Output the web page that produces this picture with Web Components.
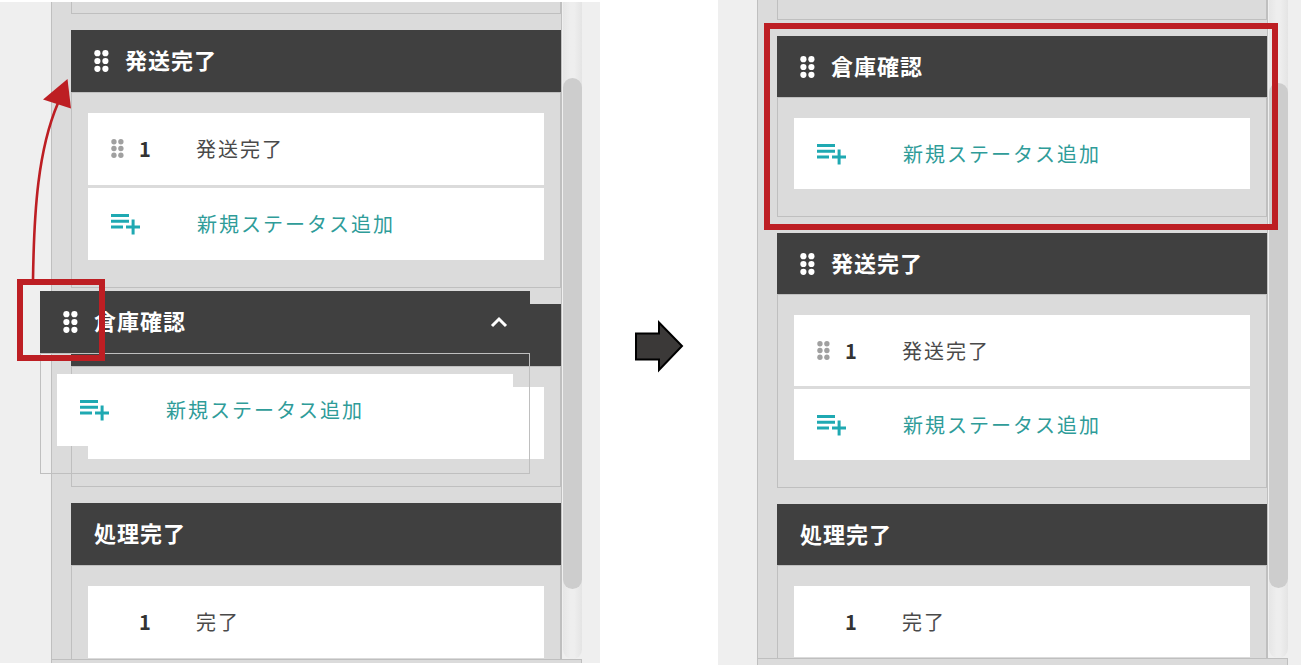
<!DOCTYPE html>
<html lang="ja">
<head>
<meta charset="utf-8">
<meta name="viewport" content="width=device-width, initial-scale=1">
<title>ステータス管理</title>
<style>
body { margin: 0; background: #fff; font-family: "Noto Sans CJK JP", sans-serif; }
</style>
</head>
<body>
<reorder-guide></reorder-guide>

<script>
const define = (name, html) => {
  const template = document.createElement('template');
  template.innerHTML = html;
  customElements.define(name, class extends HTMLElement {
    constructor() {
      super();
      this.attachShadow({ mode: 'open' }).append(template.content.cloneNode(true));
    }
  });
};

/* Six-dot grip */
define('drag-handle', `
<style>
  :host { display: block; line-height: 0; }
  svg { display: block; width: 100%; fill: currentColor; }
</style>
<svg viewBox="0 0 15 22" aria-hidden="true">
  <circle cx="3.4" cy="3.2" r="3.1"/><circle cx="11.4" cy="3.2" r="3.1"/>
  <circle cx="3.4" cy="11" r="3.1"/><circle cx="11.4" cy="11" r="3.1"/>
  <circle cx="3.4" cy="18.8" r="3.1"/><circle cx="11.4" cy="18.8" r="3.1"/>
</svg>`);

/* One status line: grip, order number, name */
define('status-row', `
<style>
  :host {
    display: grid; grid-template-columns: 28px 57px 1fr; align-items: center;
    height: var(--row, 72px); padding-left: 23px; box-sizing: border-box;
    background: #fff; color: #4a4a4a; font-size: 20px; line-height: 30px; letter-spacing: 2px;
  }
  drag-handle { width: 13px; color: #a0a0a0; }
  :host([fixed]) drag-handle { visibility: hidden; }
  .number { color: #333; font-weight: 700; }
</style>
<drag-handle></drag-handle>
<span class="number"><slot name="number"></slot></span>
<span><slot></slot></span>`);

/* Row that adds a new status */
define('add-row', `
<style>
  :host { display: block; height: var(--row, 72px); background: #fff; }
  button {
    display: grid; grid-template-columns: 86px 1fr; align-items: center;
    width: 100%; height: 100%; padding: 0 0 0 23px; border: 0; background: none;
    color: #2f9c99; font: inherit; font-size: 20px; line-height: 30px; letter-spacing: 2px;
    text-align: left; cursor: pointer;
  }
  svg { display: block; width: 29px; height: 22px; margin-top: 2px; fill: #1fa9b2; }
</style>
<button type="button">
  <svg viewBox="0 0 29 22" aria-hidden="true">
    <path d="M0 0h18v3H0zM0 5.800h18v3H0zM0 11.600h12v3H0zM20.600 5.500h3v6.100h5.600v3h-5.600v6h-3v-6H15v-3h5.600z"/>
  </svg>
  <span>新規ステータス追加</span>
</button>`);

/* Group card with a dark title bar */
define('status-group', `
<style>
  :host { display: block; position: relative; }
  header {
    display: flex; align-items: center; gap: 16px;
    height: var(--head, 62px); padding: 0 22px 0 23px; background: #404040; color: #fff;
  }
  drag-handle { width: 15px; }
  h2 { flex: 1; margin: 0; padding-bottom: 4px; font-size: 22px; line-height: 32px; font-weight: 700; letter-spacing: 1px; }
  .body {
    display: flex; flex-direction: column; gap: 3px;
    padding: 20px 16px 27px; border: 1px solid #bfbfbf;
  }
  button { display: none; padding: 0; border: 0; background: none; color: inherit; cursor: pointer; }
  button svg { display: block; width: 18px; height: 12px; fill: none; stroke: currentColor; stroke-width: 3; }
  :host([fixed]) drag-handle { display: none; }
  :host([lifted]) button { display: block; }
  :host([clipped]) .body { padding-bottom: 1px; border-bottom: 0; }
</style>
<header>
  <drag-handle></drag-handle>
  <h2><slot name="title"></slot></h2>
  <button type="button" aria-label="閉じる">
    <svg viewBox="0 0 18 12"><path d="M2 10l7-7 7 7"/></svg>
  </button>
</header>
<div class="body"><slot></slot></div>
<slot name="mark"></slot>`);

/* Place left behind by the card being dragged */
define('drop-slot', `
<style>
  :host { display: block; position: relative; }
  .head { height: var(--head, 62px); background: #404040; }
  .body { padding: 20px 16px 27px; border: 1px solid #bfbfbf; }
  .row { height: var(--row, 72px); background: #fff; }
  .lifted { position: absolute; z-index: 1; left: -31px; top: -13px; width: 100%; }
</style>
<div class="head"></div>
<div class="body"><div class="row"></div></div>
<div class="lifted"><slot></slot></div>`);

/* Red frame laid over a region */
define('red-frame', `
<style>
  :host {
    position: absolute; z-index: 2; box-sizing: border-box;
    border: 6px solid #bd1e23; pointer-events: none;
  }
</style>`);

/* Curved arrow showing the drag direction */
define('drag-path', `
<style>
  :host { position: absolute; z-index: 2; pointer-events: none; }
  svg { display: block; width: 80px; height: 210px; }
</style>
<svg viewBox="0 70 80 210" aria-hidden="true">
  <path d="M33 280C34 210 38 150 58 103" fill="none" stroke="#bd1e23" stroke-width="2.600"/>
  <path d="M67.500 79L43 99.500L71 108.500Z" fill="#bd1e23"/>
</svg>`);

/* Scrolled list with its scroll bar and the footer edge */
define('list-panel', `
<style>
  :host { display: flex; flex-direction: column; background: #efefef; }
  .view { display: grid; grid-template-columns: 1fr 20px; }
  .list {
    display: flex; flex-direction: column; gap: 16px; min-width: 0;
    padding-left: 19px; background: #dbdbdb;
    border: solid #bfbfbf; border-width: 0 1px;
  }
  .stub { box-sizing: border-box; height: var(--stub); border: 1px solid #bfbfbf; border-top: 0; }
  .track {
    display: flex; flex-direction: column; margin-left: 1px; padding: var(--thumb-top) 0 70px;
    border-radius: 0 0 10px 10px; background: linear-gradient(90deg, #e6e6e6, #eee 40%, #eee 60%, #e4e4e4);
  }
  .thumb { flex: 1; border-radius: 10px; background: #cdcdcd; }
  footer {
    flex: 1; min-height: 3px; background: #dbdbdb;
    border: solid #bfbfbf; border-width: 1px 1px 0;
  }
</style>
<div class="view">
  <div class="list"><div class="stub"></div><slot></slot></div>
  <div class="track"><div class="thumb"></div></div>
</div>
<footer></footer>`);

/* Before and after views of one reordering */
define('reorder-guide', `
<style>
  :host { display: flex; min-height: 100vh; overflow: hidden; }
  list-panel { flex: 1 1 0; min-width: 0; }
  .before { margin: 2px 0; padding: 0 18px 0 51px; --stub: 12px; --thumb-top: 76px; }
  .after { padding: 0 13px 0 39px; --stub: 20px; --thumb-top: 83px; --head: 61px; --row: 71px; }
  .next { flex: 0 0 118px; display: flex; align-items: center; justify-content: center; }
  .next svg { width: 50px; height: 56px; margin-top: 26px; }
  .grip { left: -23px; top: -12px; width: 88px; height: 82px; }
  .moved { left: -13px; top: -13px; right: -11px; bottom: -13px; }
  drag-path { left: -40px; top: -221px; }
</style>
<list-panel class="before">
  <status-group>
    <span slot="title">発送完了</span>
    <status-row><span slot="number">1</span>発送完了</status-row>
    <add-row></add-row>
  </status-group>
  <drop-slot>
    <status-group lifted>
      <span slot="title">倉庫確認</span>
      <add-row></add-row>
      <drag-path slot="mark"></drag-path>
      <red-frame slot="mark" class="grip"></red-frame>
    </status-group>
  </drop-slot>
  <status-group fixed clipped>
    <span slot="title">処理完了</span>
    <status-row fixed><span slot="number">1</span>完了</status-row>
  </status-group>
</list-panel>
<div class="next">
  <svg viewBox="0 0 50 56" aria-hidden="true">
    <path d="M2 15.500H25V4.500L48 28L25 52V41.500H2Z" fill="#3b3938" stroke="#000" stroke-width="2"/>
  </svg>
</div>
<list-panel class="after">
  <status-group>
    <span slot="title">倉庫確認</span>
    <add-row></add-row>
    <red-frame slot="mark" class="moved"></red-frame>
  </status-group>
  <status-group>
    <span slot="title">発送完了</span>
    <status-row><span slot="number">1</span>発送完了</status-row>
    <add-row></add-row>
  </status-group>
  <status-group fixed clipped>
    <span slot="title">処理完了</span>
    <status-row fixed><span slot="number">1</span>完了</status-row>
  </status-group>
</list-panel>`);
</script>
</body>
</html>
